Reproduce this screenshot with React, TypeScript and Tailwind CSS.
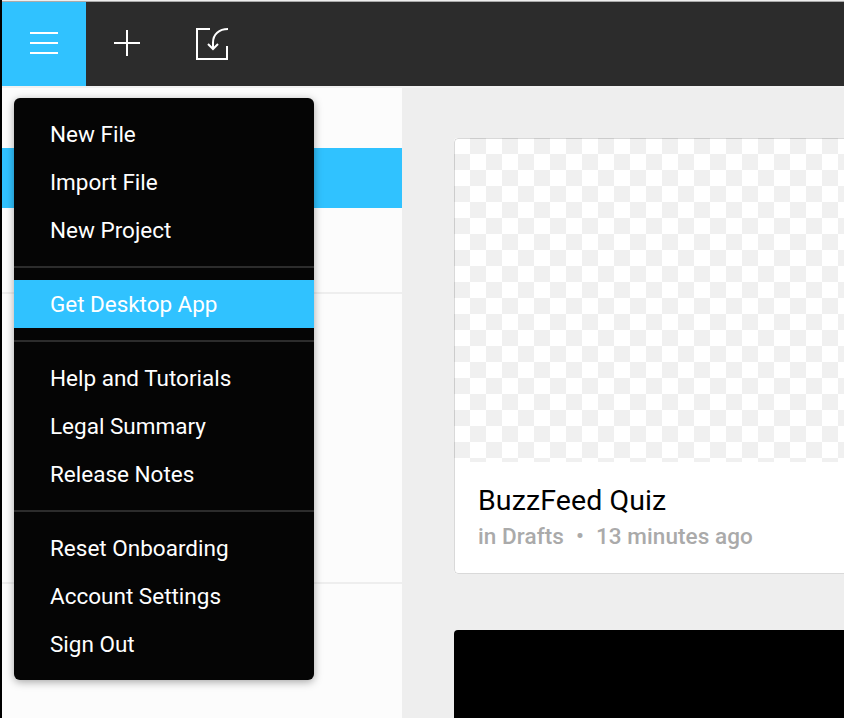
import React from "react";

const groups: string[][] = [
  ["New File", "Import File", "New Project"],
  ["Get Desktop App"],
  ["Help and Tutorials", "Legal Summary", "Release Notes"],
  ["Reset Onboarding", "Account Settings", "Sign Out"],
];

function Menu() {
  return (
    <nav className="absolute left-3 top-[10px] z-10 w-[300px] rounded-md bg-[#050505] shadow-[0_2px_8px_rgba(0,0,0,0.35)]">
      {groups.map((items, i) => (
        <ul key={i} className={i > 0 ? "border-t-2 border-[#2c2c2c] py-3" : "py-3"}>
          {items.map((item) => (
            <li
              key={item}
              className={
                item === "Get Desktop App"
                  ? "h-12 bg-[#30c2ff] pl-9 text-[22.5px] leading-[49px] tracking-[-0.04px]"
                  : "h-12 pl-9 text-[22.5px] leading-[49px]"
              }
            >
              {item}
            </li>
          ))}
        </ul>
      ))}
    </nav>
  );
}

function Toolbar() {
  return (
    <header className="flex h-[84px] shrink-0 bg-[#2c2c2c] text-white">
      <button className="h-[84px] w-[84px] bg-[#30c2ff]" aria-label="Menu">
        <svg width="84" height="84" viewBox="0 0 84 84" stroke="currentColor" strokeWidth="2" fill="none">
          <path d="M28 31h28M28 41h28M28 51h28" />
        </svg>
      </button>
      <button className="h-[84px] w-[84px]" aria-label="New file">
        <svg width="84" height="84" viewBox="0 0 84 84" stroke="currentColor" strokeWidth="2" fill="none">
          <path d="M28 41h26M41 28v26" />
        </svg>
      </button>
      <button className="h-[84px] w-[84px]" aria-label="Import">
        <svg width="84" height="84" viewBox="0 0 84 84" stroke="currentColor" strokeWidth="2" fill="none">
          <path d="M40 27H27v30h30V44" />
          <path d="M58 27C49 27 43 32.5 43 40.5V47M38 42l5 5 5-5" />
        </svg>
      </button>
    </header>
  );
}

export default function App() {
  return (
    <div className="flex h-[718px] w-[844px] flex-col overflow-hidden border-l-2 border-black bg-[#eeeeee] font-['Roboto',sans-serif]">
      <div className="h-0.5 shrink-0 border-b border-[#aaaaaa] bg-[#eeeeee]" />
      <Toolbar />
      <div className="h-0.5 shrink-0 bg-[#f1f1f1]" />
      <div className="flex min-h-0 flex-1">
        <aside className="relative w-[400px] shrink-0 bg-[#fcfcfc] pt-[60px] text-white">
          <div className="h-[60px] bg-[#30c2ff]" />
          <div className="mt-[84px] h-0.5 bg-[#eeeeee]" />
          <div className="mt-[288px] h-0.5 bg-[#eeeeee]" />
          <Menu />
        </aside>
        <main className="min-w-0 flex-1 overflow-hidden pl-[52px] pt-[50px]">
          <article className="relative h-[436px] w-[480px] overflow-hidden rounded bg-white">
            <div className="h-[324px] bg-[conic-gradient(#f0f0f0_25%,#fff_0_50%,#f0f0f0_0_75%,#fff_0)] bg-[length:32px_32px]" />
            <div className="pl-6 pt-[23px]">
              <h2 className="text-[28.5px] leading-8 tracking-[0.1px] text-black">BuzzFeed Quiz</h2>
              <p className="mt-[3px] text-[22.5px] font-medium leading-8 tracking-[0.08px] text-[#aaaaaa]">
                in Drafts<span className="mx-3">•</span>13 minutes ago
              </p>
            </div>
            <div className="absolute inset-0 rounded border border-black/15" />
          </article>
          <article className="mt-14 h-[300px] w-[480px] rounded bg-black" />
        </main>
      </div>
    </div>
  );
}
